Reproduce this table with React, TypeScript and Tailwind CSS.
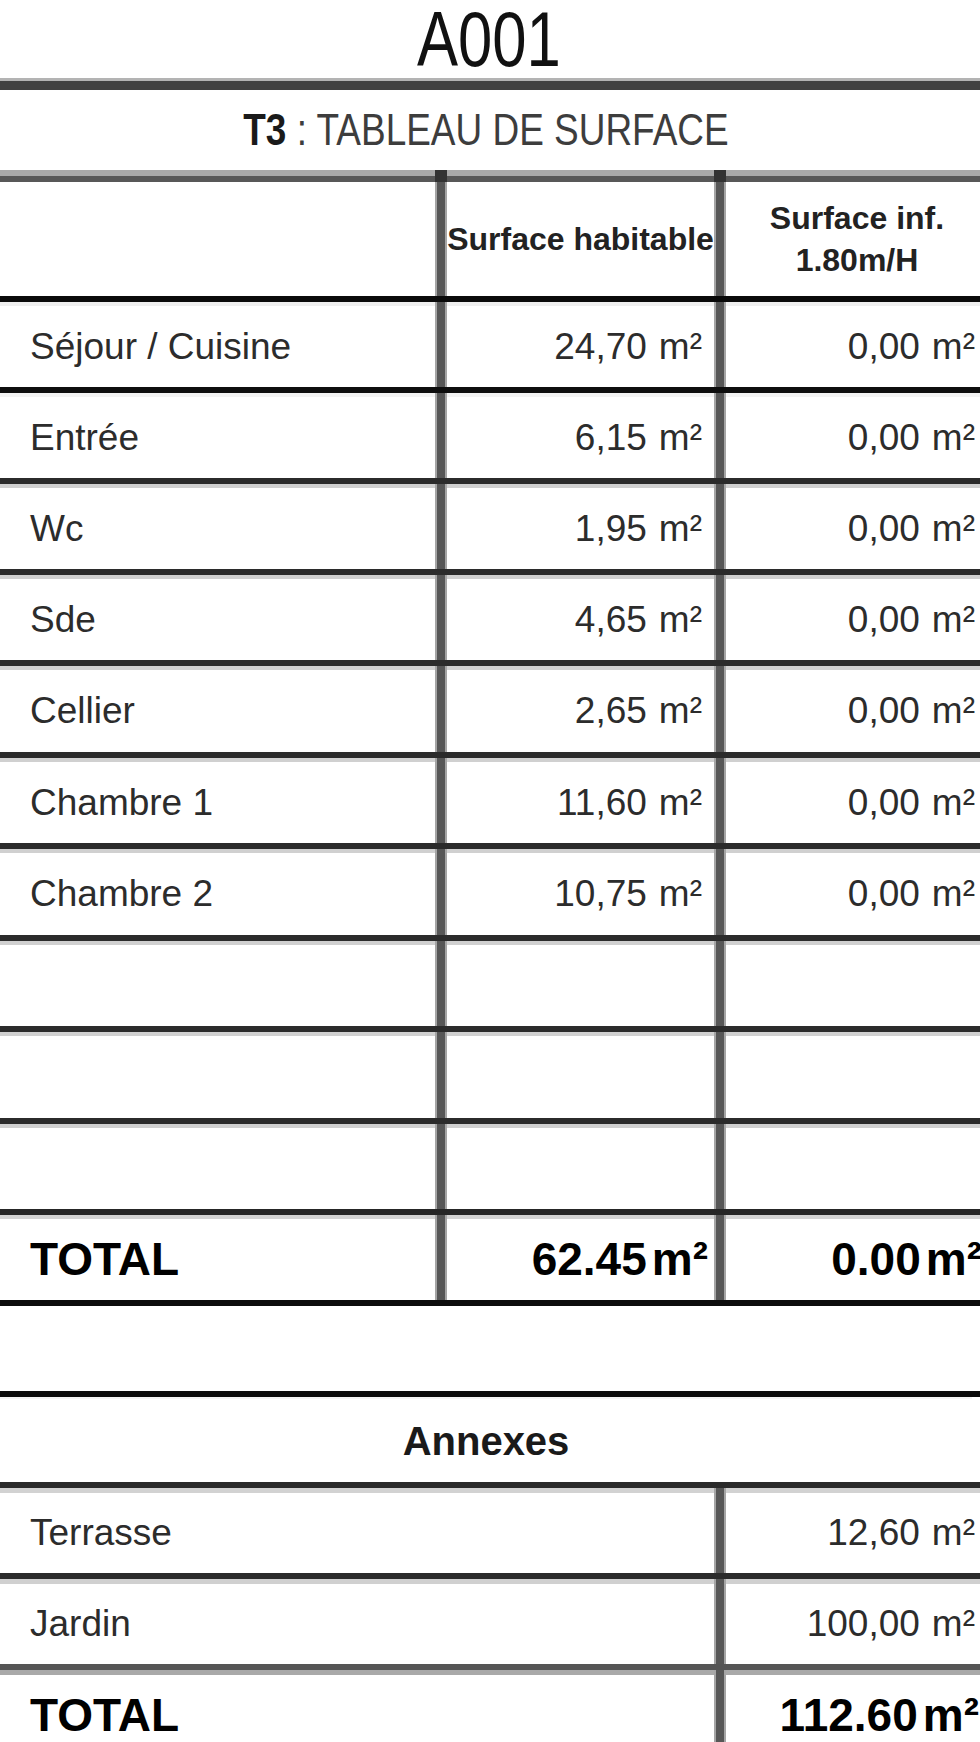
import React from "react";

const rooms = [
  { label: "Séjour / Cuisine", hab: "24,70", inf: "0,00", h: "h-[85px]", band: "border-[#efefef]", line: "bg-[#0e0e0e]" },
  { label: "Entrée", hab: "6,15", inf: "0,00", h: "h-[85px]", band: "border-[#f3f3f3]", line: "bg-[#2b2b2b]" },
  { label: "Wc", hab: "1,95", inf: "0,00", h: "h-[85px]", band: "border-[#d0d0d0]", line: "bg-[#2b2b2b]" },
  { label: "Sde", hab: "4,65", inf: "0,00", h: "h-[85px]", band: "border-[#d0d0d0]", line: "bg-[#2b2b2b]" },
  { label: "Cellier", hab: "2,65", inf: "0,00", h: "h-[86px]", band: "border-[#d0d0d0]", line: "bg-[#2b2b2b]" },
  { label: "Chambre 1", hab: "11,60", inf: "0,00", h: "h-[85px]", band: "border-[#d0d0d0]", line: "bg-[#2b2b2b]" },
  { label: "Chambre 2", hab: "10,75", inf: "0,00", h: "h-[86px]", band: "border-[#d0d0d0]", line: "bg-[#2b2b2b]" },
  { label: "", hab: "", inf: "", h: "h-[85px]", band: "border-[#d0d0d0]", line: "bg-[#2b2b2b]" },
  { label: "", hab: "", inf: "", h: "h-[86px]", band: "border-[#d0d0d0]", line: "bg-[#2b2b2b]" },
  { label: "", hab: "", inf: "", h: "h-[85px]", band: "border-[#d0d0d0]", line: "bg-[#262626]" },
];

const annexes = [
  { label: "Terrasse", value: "12,60", band: "border-[#d2d2d2]", line: "bg-[#2b2b2b]" },
  { label: "Jardin", value: "100,00", band: "border-[#d0d0d0]", line: "bg-[#555555]" },
];

function VLine() {
  return <div className="bg-[#575757] border-x-2 border-[#a5a5a5]" />;
}

function Area({ value, bold }: { value: string; bold?: boolean }) {
  if (!value) return null;
  return (
    <>
      <span>{value}</span>
      <span className={bold ? "ml-[5px]" : "ml-[12px]"}>m²</span>
    </>
  );
}

export default function App() {
  return (
    <div className="w-[980px] h-[1742px] overflow-hidden bg-white font-['Liberation_Sans',Arial,sans-serif] text-[#2c2c2c]">
      <div className="w-[988px]">
        {/* Title */}
        <div className="h-[78px] w-[978px] flex justify-center">
          <span className="text-[77px] leading-[78px] text-[#111] scale-x-[0.8]">A001</span>
        </div>
        <div className="h-[3px] bg-[#b3b3b3]" />
        <div className="h-[9px] bg-[#414141]" />

        <div className="h-[80px] w-[972px] flex items-center justify-center">
          <span className="text-[44px] leading-[80px] text-[#3d3d3d] scale-x-[0.84] whitespace-nowrap">
            <span className="font-bold text-[#1a1a1a]">T3</span> : TABLEAU DE SURFACE
          </span>
        </div>

        {/* Line under title, verticals start here */}
        <div className="h-[12px] grid grid-cols-[435px_12px_267px_12px_262px]">
          <div className="bg-[#585858] border-t-[6px] border-[#a9a9a9]" />
          <div className="bg-[#333]" />
          <div className="bg-[#585858] border-t-[6px] border-[#a9a9a9]" />
          <div className="bg-[#333]" />
          <div className="bg-[#585858] border-t-[6px] border-[#a9a9a9]" />
        </div>

        {/* Header */}
        <div className="h-[114px] grid grid-cols-[435px_12px_267px_12px_262px] font-bold text-[32px] text-[#222]">
          <div />
          <VLine />
          <div className="flex items-center justify-center whitespace-nowrap">Surface habitable</div>
          <VLine />
          <div className="flex flex-col items-center justify-center leading-[42px]">
            <span>Surface inf.</span>
            <span>1.80m/H</span>
          </div>
        </div>
        <div className="h-[6px] bg-[#0a0a0a]" />

        {/* Rooms */}
        {rooms.map((r, i) => (
          <div key={i}>
            <div className={`${r.h} grid grid-cols-[435px_12px_267px_12px_262px] text-[37px]`}>
              <div className={`flex items-center pl-[30px] border-t-4 ${r.band}`}>{r.label}</div>
              <VLine />
              <div className={`flex items-center justify-end pr-[12px] border-t-4 ${r.band}`}>
                <Area value={r.hab} />
              </div>
              <VLine />
              <div className={`flex items-center justify-end pr-[13px] border-t-4 ${r.band}`}>
                <Area value={r.inf} />
              </div>
            </div>
            <div className={`h-[6px] ${r.line}`} />
          </div>
        ))}

        {/* Total */}
        <div className="h-[85px] grid grid-cols-[435px_12px_267px_12px_262px] text-[46px] font-bold text-black">
          <div className="flex items-center pl-[30px] border-t-4 border-[#d3d3d3]">TOTAL</div>
          <VLine />
          <div className="flex items-center justify-end pr-[6px] border-t-4 border-[#d3d3d3]">
            <Area value="62.45" bold />
          </div>
          <VLine />
          <div className="flex items-center justify-end pr-[6px] border-t-4 border-[#d3d3d3]">
            <Area value="0.00" bold />
          </div>
        </div>
        <div className="h-[6px] bg-[#0d0d0d]" />

        {/* Spacer */}
        <div className="h-[85px]" />
        <div className="h-[6px] bg-[#0a0a0a]" />

        {/* Annexes */}
        <div className="h-[85px] w-[972px] flex items-center justify-center text-[40px] font-bold text-[#1a1a1a] border-t-2 border-[#f4f4f4]">
          Annexes
        </div>
        <div className="h-[6px] bg-[#2a2a2a]" />

        {annexes.map((a) => (
          <div key={a.label}>
            <div className="h-[85px] grid grid-cols-[714px_12px_262px] text-[37px]">
              <div className={`flex items-center pl-[30px] border-t-[5px] ${a.band}`}>{a.label}</div>
              <VLine />
              <div className={`flex items-center justify-end pr-[13px] border-t-[5px] ${a.band}`}>
                <Area value={a.value} />
              </div>
            </div>
            <div className={`h-[6px] ${a.line}`} />
          </div>
        ))}

        <div className="h-[85px] grid grid-cols-[714px_12px_262px] text-[46px] font-bold text-black">
          <div className="flex items-center pl-[30px] border-t-[5px] border-[#a9a9a9]">TOTAL</div>
          <VLine />
          <div className="flex items-center justify-end pr-[9px] border-t-[5px] border-[#a9a9a9]">
            <Area value="112.60" bold />
          </div>
        </div>
      </div>
    </div>
  );
}
